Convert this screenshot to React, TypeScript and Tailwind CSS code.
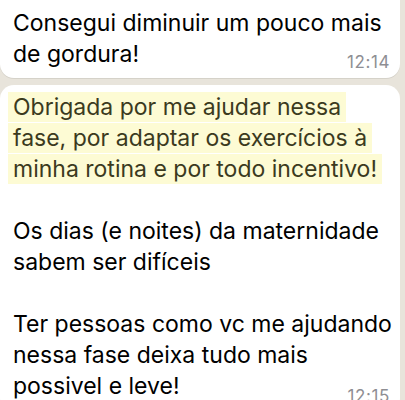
import React from "react";

const hl =
  "bg-[#fdfbd4] text-[#3b3a1e] [box-decoration-break:clone] [-webkit-box-decoration-break:clone] shadow-[5px_0_0_#fdfbd4,-5px_0_0_#fdfbd4] py-[1px]";

const body = "text-[23px] leading-[31px] text-black";
const time = "float-right text-[17px] leading-[20px] tracking-[0.6px] text-[#8e8e93] mr-[6px]";

export default function App() {
  return (
    <div
      className="w-[405px] h-[400px] overflow-hidden bg-[#e8e4db] flex flex-col gap-[7px]"
      style={{ fontFamily: "Inter, 'Liberation Sans', sans-serif" }}
    >
      <div className="w-[400px] bg-white rounded-b-[14px] pl-[13px] pr-[4px] pt-[8px] pb-[6px] shadow-[0_1px_0_rgba(0,0,0,0.08)]">
        <p className={body}>
          Consegui diminuir um pouco mais de gordura!
          <span className={`${time} mt-[13px]`}>12:14</span>
        </p>
      </div>
      <div className="w-[400px] bg-white rounded-[14px] pl-[13px] pr-[4px] pt-[7px] pb-[6px]">
        <p className={body}>
          <span className={hl}>
            Obrigada por me ajudar nessa fase, por adaptar os exercícios à minha rotina e por todo incentivo!
          </span>
        </p>
        <p className={`${body} mt-[31px]`}>
          Os dias (e noites) da maternidade sabem ser difíceis
        </p>
        <p className={`${body} mt-[31px]`}>
          Ter pessoas como vc me ajudando nessa fase deixa tudo mais possivel e leve!
          <span className={`${time} mt-[15px]`}>12:15</span>
        </p>
      </div>
    </div>
  );
}
